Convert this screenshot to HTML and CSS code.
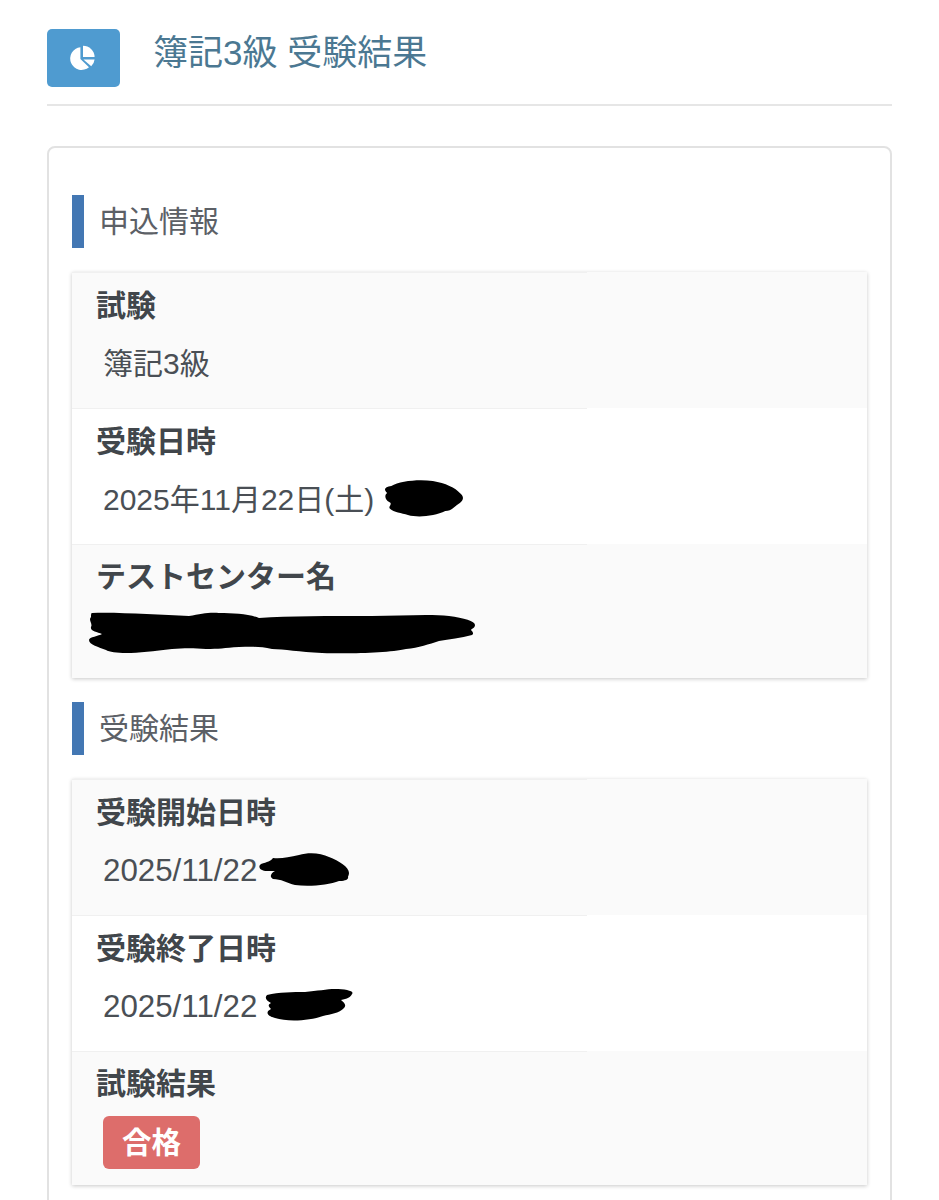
FILE: index.html
```html
<!DOCTYPE html>
<html lang="ja">
<head>
  <meta charset="UTF-8" />
  <meta name="viewport" content="width=device-width, initial-scale=1.0"/>
  <title>簿記3級 受験結果</title>
  <link rel="stylesheet" href="styles.css">
</head>
<body>
  <header class="page-head">
    <div class="head-icon">
      <svg class="pie" viewBox="0 0 28 28" width="28" height="28">
        <path fill="#fff" d="M12.4 3.2V15l8.6 8.2A11.4 11.4 0 1 1 12.4 3.2z"/>
        <path fill="#fff" d="M15 1.8A11.6 11.6 0 0 1 26.6 13H15z"/>
        <path fill="#fff" d="M15.4 15.4h11.2a11.5 11.5 0 0 1-3.4 6.8z"/>
      </svg>
    </div>
    <h1 class="page-title">簿記3級 受験結果</h1>
  </header>

  <main class="panel">
    <h2 class="section-title">申込情報</h2>
    <div class="info-table">
      <div class="row">
        <div class="cell">
          <div class="label">試験</div>
          <div class="value">簿記3級</div>
        </div>
      </div>
      <div class="row">
        <div class="cell">
          <div class="label">受験日時</div>
          <div class="value gap-date">2025年11月22日(土)
            <svg class="scribble" viewBox="0 0 78 37" width="81" height="37" preserveAspectRatio="none"><path d="M8 6C16 1 34-1 48 1C60 3 70 8 74 13C78 16 78 20 74 23C68 27 66 31 60 31C50 36 34 38 24 35C18 33 10 32 7 29C4 27 10 24 6 22C2 20 1 15 4 13C0 9 2 7 8 6Z"/></svg>
          </div>
        </div>
      </div>
      <div class="row">
        <div class="cell">
          <div class="label">テストセンター名</div>
          <div class="value">
            <svg class="scribble wide" viewBox="0 0 386 42" width="386" height="42"><path d="M3 1C30 0 70 3 100 4C112 2 120 0 130 1C145 1 160 2 170 6C200 4 240 4 283 4C310 4 340 2 360 4C375 6 386 9 386 13C386 16 382 17 382 18C384 20 385 22 383 23C372 26 360 27 350 29C340 32 330 36 317 37C300 41 260 42 233 41C210 40 195 37 183 37C170 34 160 35 150 35C135 36 130 37 117 37C105 36 95 36 83 37C65 39 50 41 37 41C28 41 20 40 17 38C10 35 0 33 0 28C0 25 10 24 13 22C8 20 1 19 2 15C4 12-1 8 2 5C2 3 2 1 3 1Z"/></svg>
          </div>
        </div>
      </div>
    </div>

    <h2 class="section-title">受験結果</h2>
    <div class="info-table">
      <div class="row">
        <div class="cell">
          <div class="label">受験開始日時</div>
          <div class="value num tight">2025/11/22<svg class="scribble" viewBox="0 0 90 33" width="90" height="33"><path d="M2 11C8 9 12 8 14 5C22 6 30 4 40 2C50-1 62 0 70 4C80 8 90 14 90 20C90 22 89 23 89 24C90 27 84 28 80 28C70 32 50 34 36 32C28 30 22 26 14 26C10 24 12 20 16 18L8 18C2 18-2 14 2 11Z"/></svg>
          </div>
        </div>
      </div>
      <div class="row">
        <div class="cell">
          <div class="label">受験終了日時</div>
          <div class="value num">2025/11/22
            <svg class="scribble" viewBox="0 0 88 32" width="88" height="32"><path d="M2 6C14 3 28 3 40 3C52 2 62 0 70 0C80 0 90 2 87 5C86 8 82 10 76 11C80 14 82 17 78 20C74 24 66 25 58 27C44 32 22 33 10 29C2 27 0 23 6 20C4 18 2 16 6 14C0 11 0 8 2 6Z"/></svg>
          </div>
        </div>
      </div>
      <div class="row">
        <div class="cell">
          <div class="label">試験結果</div>
          <div class="value"><span class="badge">合格</span></div>
        </div>
      </div>
    </div>
  </main>
</body>
</html>
```

FILE: styles.css
```css
html {
  overflow: hidden;
}

body {
  margin: 0;
  padding: 29px 47px 0 47px;
  font-family: "Liberation Sans", "Noto Sans CJK JP", sans-serif;
  background-color: #fff;
  color: #4a4f55;
}

.page-head {
  display: flex;
  align-items: flex-start;
  gap: 33px;
  padding-bottom: 17px;
  border-bottom: 2px solid #e6e6e6;
}

.head-icon {
  display: flex;
  align-items: center;
  justify-content: center;
  width: 73px;
  height: 58px;
  flex-shrink: 0;
  border-radius: 5px;
  background-color: #4f9bd0;
}

.pie {
  margin-left: -3px;
}

.page-title {
  margin: 0;
  font-size: 35px;
  font-weight: 400;
  line-height: 48px;
  color: #4b7892;
}

.panel {
  margin-top: 40px;
  padding: 47px 23px 20px;
  border: 2px solid #e2e2e2;
  border-radius: 8px;
}

.section-title {
  margin: 0 0 24px;
  padding-left: 15px;
  height: 53px;
  border-left: 12px solid #4377b3;
  font-size: 30px;
  font-weight: 400;
  line-height: 53px;
  color: #5c6066;
}

.info-table {
  margin-bottom: 24px;
  box-shadow: 0 1px 4px rgba(0, 0, 0, 0.22);
}

.row {
  background-color: #fff;
}

.row:nth-child(odd) {
  background-color: #fafafa;
}

.cell {
  width: 515px;
  height: 136px;
  padding: 12px 0 0 24px;
  box-sizing: border-box;
  border-top: 1px solid #f0f0f0;
}

.row:last-child .cell {
  height: 134px;
  padding-top: 11px;
}

.label {
  height: 48px;
  font-size: 30px;
  font-weight: 700;
  line-height: 42px;
  color: #41464b;
}

.row:last-child .label {
  height: 49px;
}

.value {
  display: flex;
  align-items: center;
  gap: 8px;
  height: 62px;
  padding-left: 7px;
  font-size: 30px;
  line-height: 40px;
  color: #4a4f55;
}

.num {
  font-size: 31.3px;
}

.gap-date {
  gap: 9px;
}

.tight {
  gap: 2px;
}

.row:last-child .value {
  height: 60px;
}

.scribble {
  flex-shrink: 0;
  margin-top: -4px;
  fill: #000;
}

.wide {
  margin: -5px 0 0 -14px;
}

.badge {
  display: block;
  padding: 4px 19px;
  border-radius: 6px;
  background-color: #dd6d6b;
  color: #fff;
  font-size: 29.5px;
  font-weight: 700;
  line-height: 45px;
}
```
